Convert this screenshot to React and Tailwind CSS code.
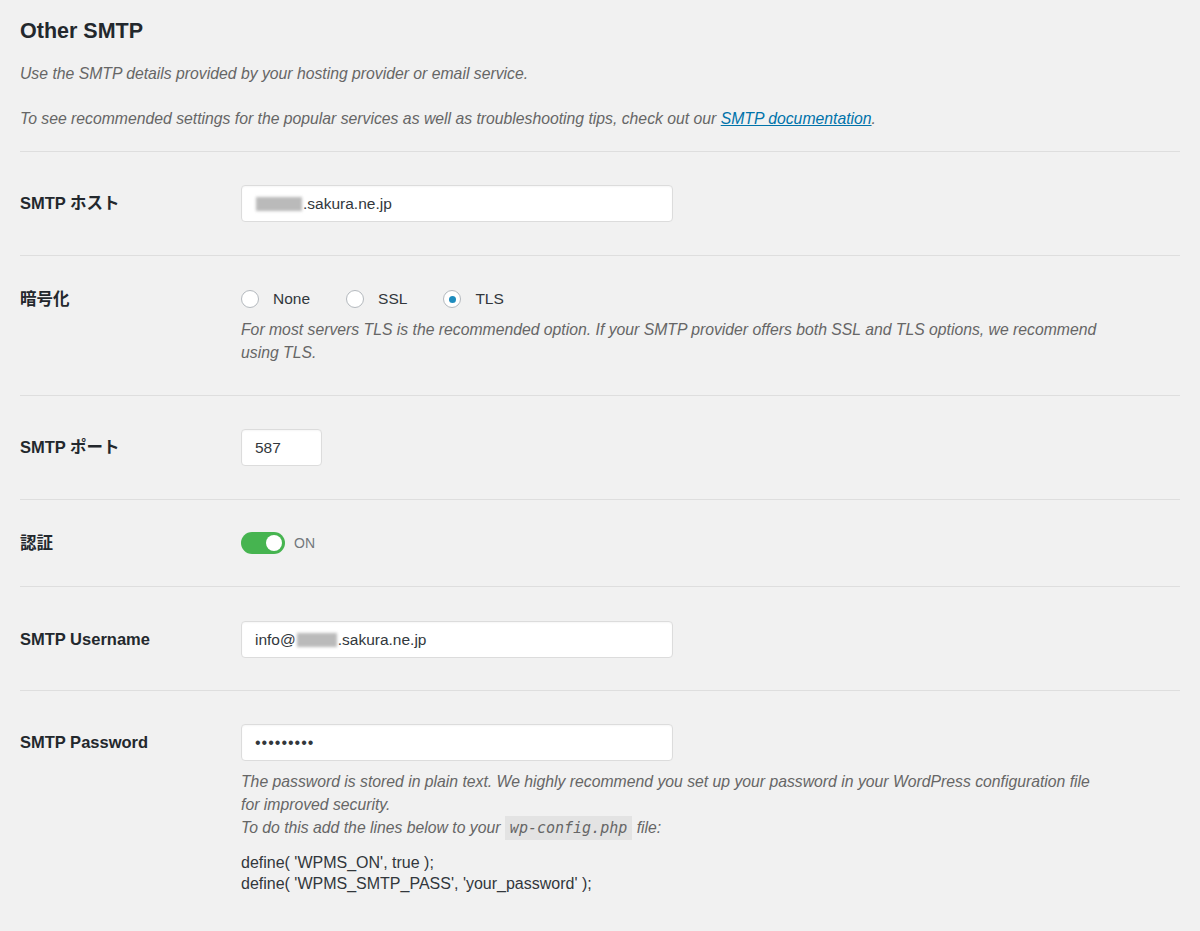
import React from 'react';

const font = { fontFamily: '"Liberation Sans", "Noto Sans CJK JP", Arial, sans-serif' };

const Blur = ({ w }) => (
    <span className="inline-block align-middle h-[14px] bg-[#a9a9a9] blur-[1.5px] opacity-80 mx-[1px]" style={{ width: w }} />
);

const TextBox = ({ children, narrow }) => (
    <div className={`${narrow ? 'w-[81px]' : 'w-[432px]'} h-[37px] bg-white border border-[#dcdcdc] rounded-[4px] shadow-[inset_0_1px_2px_rgba(0,0,0,0.04)] flex items-center pl-[13px] text-[15.5px] text-[#32373c]`}>
        {children}
    </div>
);

const Radio = ({ checked, label }) => (
    <label className="flex items-center">
        <span className="w-[18px] h-[18px] rounded-full bg-white border border-[#b4b9be] flex items-center justify-center">
            {checked && <span className="w-[7px] h-[7px] rounded-full bg-[#1e8cbe]" />}
        </span>
        <span className="ml-[14px] text-[15.5px] text-[#32373c]">{label}</span>
    </label>
);

const Row = ({ label, labelLeading = 'leading-[37px]', pt = 'pt-[33px]', pb = 'pb-[33px]', children }) => (
    <div className={`flex border-t border-[#dedede] ${pt} ${pb}`}>
        <div className={`w-[221px] shrink-0 text-[16.5px] font-bold text-[#23282d] ${labelLeading}`}>{label}</div>
        <div className="flex-1">{children}</div>
    </div>
);

const Desc = ({ children, className = '' }) => (
    <p className={`italic text-[15.75px] leading-[23px] text-[#666] ${className}`}>{children}</p>
);

export default function App() {
    return (
        <div className="min-h-[931px] bg-[#f1f1f1] px-5 pt-[17px]" style={font}>
            <h2 className="text-[21.5px] font-bold text-[#23282d] leading-[28px]">Other SMTP</h2>
            <Desc className="mt-[17px]">Use the SMTP details provided by your hosting provider or email service.</Desc>
            <Desc className="mt-[22px] pb-[21px]">
                To see recommended settings for the popular services as well as troubleshooting tips, check out our{' '}
                <a href="#" className="text-[#0073aa] underline">SMTP documentation</a>.
            </Desc>

            <Row label="SMTP ホスト">
                <TextBox><Blur w={46} />.sakura.ne.jp</TextBox>
            </Row>

            <Row label="暗号化" labelLeading="leading-[20px]" pt="pt-[33px]" pb="pb-[31px]">
                <div className="flex items-center gap-[36px] h-[20px]">
                    <Radio label="None" />
                    <Radio label="SSL" />
                    <Radio label="TLS" checked />
                </div>
                <Desc className="mt-[9px]">
                    For most servers TLS is the recommended option. If your SMTP provider offers both SSL and TLS options, we recommend<br />
                    using TLS.
                </Desc>
            </Row>

            <Row label="SMTP ポート">
                <TextBox narrow>587</TextBox>
            </Row>

            <Row label="認証" labelLeading="leading-[22px]" pt="pt-[32px]" pb="pb-[32px]">
                <div className="flex items-center h-[22px]">
                    <span className="w-[44px] h-[22px] rounded-full bg-[#46b450] flex items-center justify-end pr-[3px]">
                        <span className="w-[16px] h-[16px] rounded-full bg-white" />
                    </span>
                    <span className="ml-[9px] text-[14px] text-[#72777c]">ON</span>
                </div>
            </Row>

            <Row label="SMTP Username" pt="pt-[34px]" pb="pb-[32px]">
                <TextBox>info@<Blur w={40} />.sakura.ne.jp</TextBox>
            </Row>

            <Row label="SMTP Password" pb="pb-[40px]">
                <TextBox><span className="tracking-[1px] text-[16px]">•••••••••</span></TextBox>
                <Desc className="mt-[9px]">
                    The password is stored in plain text. We highly recommend you set up your password in your WordPress configuration file<br />
                    for improved security.<br />
                    To do this add the lines below to your{' '}
                    <code className="bg-[#e3e3e3] px-[5px] py-[3px] text-[15px] italic" style={{ fontFamily: '"DejaVu Sans Mono", "Liberation Mono", monospace' }}>wp-config.php</code>{' '}
                    file:
                </Desc>
                <div className="mt-[12px] text-[16px] leading-[21px] text-[#32373c]">
                    define( 'WPMS_ON', true );<br />
                    define( 'WPMS_SMTP_PASS', 'your_password' );
                </div>
            </Row>
        </div>
    );
}
